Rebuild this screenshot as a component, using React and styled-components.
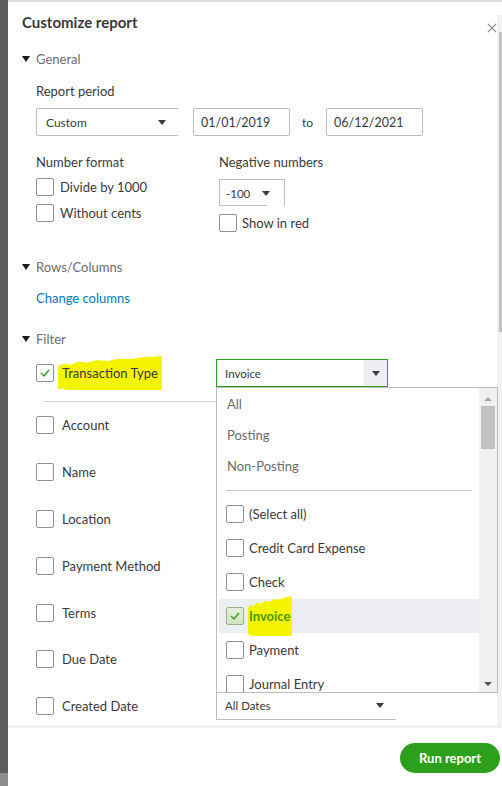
import React from 'react';
import styled, { createGlobalStyle } from 'styled-components';

const Global = createGlobalStyle`
  html, body { margin: 0; padding: 0; }
  body {
    width: 502px; height: 786px; overflow: hidden;
    background: linear-gradient(#5c5c5c 0, #5c5c5c 773px, #8c8c8c 773px);
    font-family: Lato, "Open Sans", sans-serif;
    color: #393a3d;
  }
  * { box-sizing: border-box; }
`;

const Page = styled.div`
  display: flex;
  height: 786px;
  padding-left: 8px;
`;

const Panel = styled.div`
  flex: 1;
  display: flex;
  flex-direction: column;
  background: #fff;
  border-top: 2px solid #dcdee2;
  position: relative;
`;

const Close = styled.div`
  position: absolute;
  top: 15px;
  right: 5px;
  width: 10px;
  height: 10px;
`;

const BodyRow = styled.div`
  display: flex;
  height: 723px;
  overflow: hidden;
`;

const Content = styled.div`
  flex: 1;
  display: flex;
  flex-direction: column;
  padding: 10px 0 0 14px;
  min-width: 0;
`;

const Track = styled.div`
  width: 5px;
  margin-top: 13px;
  background: #f1f1f1;
  display: flex;
  flex-direction: column;
  padding: 17px 0 0 2px;
`;

const Thumb = styled.div`
  height: 300px;
  background: #c1c1c1;
`;

const Title = styled.div`
  font-size: 15px;
  font-weight: 700;
  line-height: 20px;
  height: 20px;
  color: #393a3d;
`;

const SectionHeader = styled.div`
  display: flex;
  align-items: center;
  gap: 6px;
  height: 20px;
  margin-top: ${p => p.$mt}px;
  font-size: 13px;
  color: #6b6c72;
  flex: none;
`;

const Caret = styled.span`
  width: 0; height: 0;
  border-left: ${p => p.$w / 2}px solid transparent;
  border-right: ${p => p.$w / 2}px solid transparent;
  border-top: ${p => p.$h}px solid ${p => p.$c || '#1a1a1a'};
  flex: none;
`;

const SectionBody = styled.div`
  display: flex;
  flex-direction: column;
  padding-left: 14px;
  flex: none;
`;

const Label = styled.div`
  font-size: 13px;
  line-height: 20px;
  height: 20px;
  margin-top: ${p => p.$mt || 0}px;
  color: #393a3d;
`;

const InputRow = styled.div`
  display: flex;
  align-items: center;
  margin-top: 7px;
  height: 28px;
`;

const Field = styled.div`
  display: flex;
  align-items: center;
  justify-content: space-between;
  height: ${p => p.$h || 28}px;
  width: ${p => p.$w}px;
  margin-left: ${p => p.$ml || 0}px;
  padding: 0 ${p => p.$pr ?? 10}px 0 ${p => p.$pl ?? 9}px;
  border: 1px solid #babec5;
  ${p => p.$noRight && 'border-right-color: transparent;'}
  border-radius: 2px;
  font-size: ${p => p.$fs || 12}px;
  color: #393a3d;
  background: #fff;
  flex: none;
`;

const To = styled.span`
  font-size: 12px;
  margin: 0 13px 0 12px;
  color: #393a3d;
`;

const Grid = styled.div`
  display: grid;
  grid-template-columns: 183px 1fr;
  margin-top: 16px;
`;

const Col = styled.div`
  display: flex;
  flex-direction: column;
`;

const CheckRow = styled.label`
  display: flex;
  align-items: center;
  gap: ${p => p.$gap || 6}px;
  height: 18px;
  margin-top: ${p => p.$mt || 0}px;
  font-size: 13px;
  color: #393a3d;
`;

const Box = styled.span`
  width: 18px;
  height: 18px;
  border: 1px solid ${p => (p.$sel ? '#94b487' : '#8d9096')};
  border-radius: 2px;
  background: ${p => (p.$sel ? 'linear-gradient(#e3f0da, #cfe4c1)' : '#fff')};
  display: flex;
  align-items: center;
  justify-content: center;
  flex: none;
`;

const NegSelect = styled.div`
  position: relative;
  display: flex;
  align-items: center;
  justify-content: space-between;
  width: 66px;
  height: 27px;
  margin-top: 7px;
  padding: 0 14px 0 6px;
  border: 1px solid #babec5;
  border-bottom: none;
  font-size: 11.5px;
  &::after {
    content: '';
    position: absolute;
    left: -1px;
    bottom: 0;
    width: 48px;
    border-bottom: 1px solid #babec5;
  }
`;

const Link = styled.a`
  display: block;
  margin-top: 11px;
  height: 20px;
  line-height: 20px;
  font-size: 13px;
  color: #0077c5;
  text-decoration: none;
`;

const FilterRow = styled.div`
  display: flex;
  align-items: center;
  height: ${p => p.$h || 46.8}px;
  margin-top: ${p => p.$mt || 0}px;
  flex: none;
`;

const FilterLabel = styled.div`
  display: flex;
  align-items: center;
  gap: 8px;
  width: 180px;
  font-size: 13px;
  color: #393a3d;
  flex: none;
`;

const Highlight = styled.span`
  display: inline-block;
  background: #f4f400;
  line-height: ${p => p.$lh}px;
  padding: 0 ${p => p.$pr || 4}px 0 ${p => p.$pl || 4}px;
  margin-left: ${p => p.$ml || -4}px;
  clip-path: polygon(0 30%, 6% 22%, 12% 26%, 20% 16%, 28% 20%, 38% 12%, 48% 15%, 58% 8%, 70% 9%, 82% 4%, 100% 0, 100% 100%, 8% 100%, 4% 95%, 0 98%);
  font-weight: ${p => (p.$bold ? 700 : 400)};
  color: ${p => p.$color || '#393a3d'};
`;

const SelectWrap = styled.div`
  position: relative;
  flex: none;
`;

const GreenSelect = styled.div`
  display: flex;
  align-items: stretch;
  width: 172px;
  height: 28px;
  border: 1px solid #2ca01c;
  font-size: 11.5px;
  color: #393a3d;
  background: #fff;
`;

const SelectText = styled.span`
  flex: 1;
  display: flex;
  align-items: center;
  padding-left: 8px;
`;

const ArrowBtn = styled.span`
  width: 23px;
  background: #eceef1;
  display: flex;
  align-items: center;
  justify-content: center;
`;

const Divider = styled.div`
  height: 1px;
  background: #d4d7dc;
  margin: 14px 0 0 21px;
  width: 440px;
  flex: none;
`;

const Dropdown = styled.div`
  position: absolute;
  top: 28px;
  left: 0;
  width: 282px;
  height: 306px;
  border: 1px solid #babec5;
  background: #fff;
  display: flex;
  z-index: 5;
  overflow: hidden;
`;

const List = styled.div`
  flex: 1;
  display: flex;
  flex-direction: column;
  padding: 1px 0 0 2px;
  overflow: hidden;
`;

const Option = styled.div`
  height: 31px;
  line-height: 31px;
  padding-left: 8px;
  font-size: 13px;
  color: #6b6c72;
  flex: none;
`;

const ListDivider = styled.div`
  height: 1px;
  background: #c4c6ca;
  margin: 8px 7px 6px 7px;
  flex: none;
`;

const CheckOption = styled.div`
  display: flex;
  align-items: center;
  gap: 5px;
  height: 34px;
  padding-left: 7px;
  font-size: 13px;
  color: #393a3d;
  background: ${p => (p.$active ? '#eceef1' : 'transparent')};
  flex: none;
`;

const ListScroll = styled.div`
  width: 18px;
  background: #f0f0f0;
  display: flex;
  flex-direction: column;
  align-items: center;
  padding: 9px 0 6px;
`;

const UpArrow = styled.span`
  width: 0; height: 0;
  border-left: 4px solid transparent;
  border-right: 4px solid transparent;
  border-bottom: 4px solid #a8a8a8;
`;

const ScrollThumb = styled.div`
  width: 14px;
  height: 43px;
  margin-top: 5px;
  background: #c1c1c1;
`;

const Spacer = styled.div`
  flex: 1;
`;

const DateSelect = styled.div`
  display: flex;
  align-items: center;
  justify-content: space-between;
  width: 180px;
  height: 27px;
  padding: 0 12px 0 8px;
  border-left: 1px solid #babec5;
  border-bottom: 1px solid #babec5;
  font-size: 11.5px;
  color: #393a3d;
`;

const Band = styled.div`
  height: 3px;
  background: #eef0f3;
  flex: none;
`;

const Footer = styled.div`
  flex: 1;
  display: flex;
  justify-content: flex-end;
  align-items: flex-start;
  padding: 15px 2px 0 0;
`;

const RunButton = styled.button`
  width: 100px;
  height: 30px;
  border: none;
  border-radius: 15px;
  background: #2ca01c;
  color: #fff;
  font-family: inherit;
  font-size: 13px;
  font-weight: 700;
  cursor: pointer;
`;

const Check = ({ color = '#2ca01c' }) => (
  <svg width="10" height="8" viewBox="0 0 10 8">
    <polyline points="1,4 4,7 9,1" fill="none" stroke={color} strokeWidth="1.4" />
  </svg>
);

const leftFilters = ['Account', 'Name', 'Location', 'Payment Method', 'Terms', 'Due Date'];
const typeOptions = ['(Select all)', 'Credit Card Expense', 'Check', 'Invoice', 'Payment', 'Journal Entry'];

export default function App() {
  return (
    <>
      <Global />
      <Page>
        <Panel>
          <Close>
            <svg width="10" height="10" viewBox="0 0 10 10">
              <path d="M1 1 L9 9 M9 1 L1 9" stroke="#8d9096" strokeWidth="1.1" />
            </svg>
          </Close>
          <BodyRow>
            <Content>
              <Title>Customize report</Title>

              <SectionHeader $mt={17}><Caret $w={9} $h={6} />General</SectionHeader>
              <SectionBody>
                <Label $mt={12}>Report period</Label>
                <InputRow>
                  <Field $w={143} $noRight $pr={12}>Custom<Caret $w={8} $h={5} $c="#393a3d" /></Field>
                  <Field $w={97} $pl={7} $ml={14} $fs={12.5}>01/01/2019</Field>
                  <To>to</To>
                  <Field $w={97} $pl={7} $fs={12.5}>06/12/2021</Field>
                </InputRow>
                <Grid>
                  <Col>
                    <Label>Number format</Label>
                    <CheckRow $mt={6}><Box />Divide by 1000</CheckRow>
                    <CheckRow $mt={8}><Box />Without cents</CheckRow>
                  </Col>
                  <Col>
                    <Label>Negative numbers</Label>
                    <NegSelect>-100<Caret $w={8} $h={5} $c="#393a3d" /></NegSelect>
                    <CheckRow $mt={8} $gap={5}><Box />Show in red</CheckRow>
                  </Col>
                </Grid>
              </SectionBody>

              <SectionHeader $mt={25}><Caret $w={9} $h={6} />Rows/Columns</SectionHeader>
              <SectionBody>
                <Link>Change columns</Link>
              </SectionBody>

              <SectionHeader $mt={21}><Caret $w={9} $h={6} />Filter</SectionHeader>
              <SectionBody>
                <FilterRow $h={28} $mt={10}>
                  <FilterLabel>
                    <Box><Check /></Box>
                    <Highlight $lh={34} $pr={4}>Transaction Type</Highlight>
                  </FilterLabel>
                  <SelectWrap>
                    <GreenSelect>
                      <SelectText>Invoice</SelectText>
                      <ArrowBtn><Caret $w={8} $h={5} $c="#393a3d" /></ArrowBtn>
                    </GreenSelect>
                    <Dropdown>
                      <List>
                        <Option>All</Option>
                        <Option>Posting</Option>
                        <Option>Non-Posting</Option>
                        <ListDivider />
                        {typeOptions.map(o => (
                          <CheckOption key={o} $active={o === 'Invoice'}>
                            {o === 'Invoice' ? (
                              <>
                                <Box $sel><Check color="#3c9a1e" /></Box>
                                <Highlight $lh={40} $bold $color="#4a9a00" $ml={-1} $pl={1} $pr={2}>Invoice</Highlight>
                              </>
                            ) : (
                              <>
                                <Box />
                                {o}
                              </>
                            )}
                          </CheckOption>
                        ))}
                      </List>
                      <ListScroll>
                        <UpArrow />
                        <ScrollThumb />
                        <Spacer />
                        <Caret $w={8} $h={4} $c="#505050" />
                      </ListScroll>
                    </Dropdown>
                  </SelectWrap>
                </FilterRow>
              </SectionBody>
              <Divider />
              <SectionBody>
                {leftFilters.map(f => (
                  <FilterRow key={f}>
                    <FilterLabel><Box />{f}</FilterLabel>
                  </FilterRow>
                ))}
                <FilterRow>
                  <FilterLabel><Box />Created Date</FilterLabel>
                  <DateSelect>All Dates<Caret $w={8} $h={5} $c="#393a3d" /></DateSelect>
                </FilterRow>
              </SectionBody>
            </Content>
            <Track><Thumb /></Track>
          </BodyRow>
          <Band />
          <Footer>
            <RunButton>Run report</RunButton>
          </Footer>
        </Panel>
      </Page>
    </>
  );
}
